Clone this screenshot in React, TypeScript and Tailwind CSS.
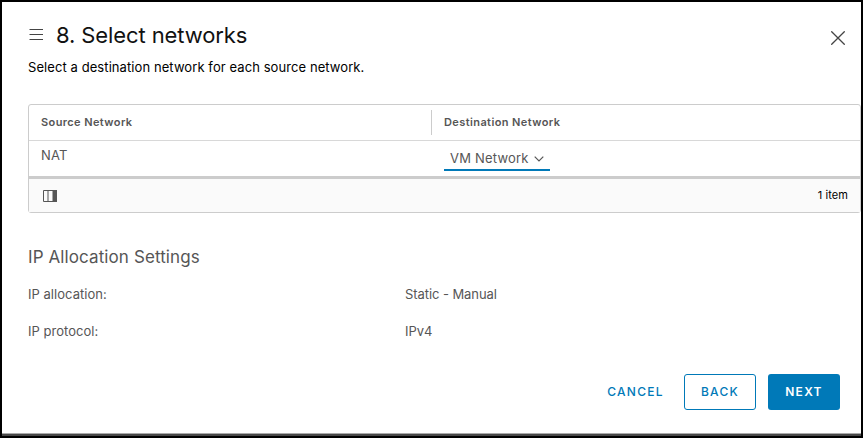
import type { ReactNode } from 'react';

interface NetworkMapping {
    source: string;
    destination: string;
}

interface SettingProps {
    label: string;
    children: ReactNode;
}

const mappings: NetworkMapping[] = [{ source: 'NAT', destination: 'VM Network' }];

function MenuIcon() {
    return (
        <svg width="14" height="12" viewBox="0 0 14 12" stroke="#444" strokeWidth="1.2" className="shrink-0">
            <path d="M.5.5h13.5M.5 5.5h13.5M.5 10.5h13.5" />
        </svg>
    );
}

function CloseIcon() {
    return (
        <svg width="14" height="14" viewBox="0 0 14 14" stroke="#444" strokeWidth="1.3" strokeLinecap="round">
            <path d="M.7.7l12.6 12.6M13.3.7L.7 13.3" />
        </svg>
    );
}

function ColumnsIcon() {
    return (
        <svg width="14" height="12" viewBox="0 0 14 12" fill="none" stroke="#555">
            <path d="M.5.5h13v11H.5zM5 .5v11" />
            <path d="M9.5 0h4.5v12H9.5z" fill="#555" stroke="none" />
        </svg>
    );
}

function Setting({ label, children }: SettingProps) {
    return (
        <div className="flex h-[37px] items-center text-[13px] text-[#565656]">
            <dt className="w-[377px] tracking-[0.03px]">{label}</dt>
            <dd className="tracking-[-0.07px]">{children}</dd>
        </div>
    );
}

export default function App() {
    return (
        <div className="flex h-[438px] w-[863px] flex-col overflow-hidden border-2 border-black bg-white font-['Inter',sans-serif]">
            <header className="flex h-[51px] items-center pt-[15px] pr-[16px] pl-[27px]">
                <MenuIcon />
                <h1 className="ml-[13px] grow text-[22px] leading-[30px] tracking-[-0.1px] whitespace-nowrap text-[#111]">
                    8. Select networks
                </h1>
                <button type="button" aria-label="Close" className="mt-[5px]">
                    <CloseIcon />
                </button>
            </header>
            <p className="h-[51px] pt-[4px] pl-[26px] text-[13px] leading-5 tracking-[0.08px] text-black">
                Select a destination network for each source network.
            </p>

            {/* Network mapping grid */}
            <section className="ml-[26px] h-[109px] shrink-0 rounded-[3px] border border-[#ccc] text-[#565656]">
                <div className="flex h-[36px] items-center border-b border-[#d8d8d8] text-[11px] font-semibold tracking-[0.4px]">
                    <span className="w-[402px] pl-[12px]">Source Network</span>
                    <span className="h-[25px] w-px bg-[#ccc]" />
                    <span className="pl-[12px]">Destination Network</span>
                </div>
                {mappings.map(row => (
                    <div key={row.source} className="flex h-[38px] border-b-[3px] border-[#ccc] text-[13px] tracking-[0.2px]">
                        <span className="w-[403px] pt-[4px] pl-[12px] leading-5">{row.source}</span>
                        <button
                            type="button"
                            className="ml-[12px] flex h-[30px] w-[106px] shrink-0 items-center border-b-2 border-[#0079b8] pt-[7px] pl-[6px]"
                        >
                            <span className="w-[84px] text-left whitespace-nowrap">{row.destination}</span>
                            <svg width="10" height="6" viewBox="0 0 10 6" fill="none" stroke="#565656" strokeWidth="1.2">
                                <path d="M.7.7L5 5 9.3.7" />
                            </svg>
                        </button>
                    </div>
                ))}
                <div className="flex h-[33px] items-center justify-between bg-[#fafafa] pr-[12px] pl-[14px] text-[11px] tracking-[0.1px] text-black">
                    <ColumnsIcon />
                    <span>1 item</span>
                </div>
            </section>

            <section className="mt-[32px] pl-[26px]">
                <h2 className="h-[31px] text-[17px] leading-6 tracking-[0.1px] text-[#565656]">IP Allocation Settings</h2>
                <dl>
                    <Setting label="IP allocation:">Static - Manual</Setting>
                    <Setting label="IP protocol:">IPv4</Setting>
                </dl>
            </section>

            {/* Wizard actions */}
            <footer className="mt-auto flex h-[59px] shrink-0 gap-[12px] pr-[21px] text-[12px] font-medium tracking-[1.3px]">
                <button type="button" className="mr-[2px] ml-auto flex h-[36px] w-[69px] items-center justify-center text-[#0079b8]">
                    CANCEL
                </button>
                <button type="button" className="h-[36px] w-[72px] rounded-[3px] border border-[#0079b8] text-[#0079b8]">BACK</button>
                <button type="button" className="h-[36px] w-[72px] rounded-[3px] bg-[#0079b8] font-semibold text-white">NEXT</button>
            </footer>
            <div className="h-[3px] shrink-0 border-t border-[#aaa] bg-[#484848]" />
        </div>
    );
}
